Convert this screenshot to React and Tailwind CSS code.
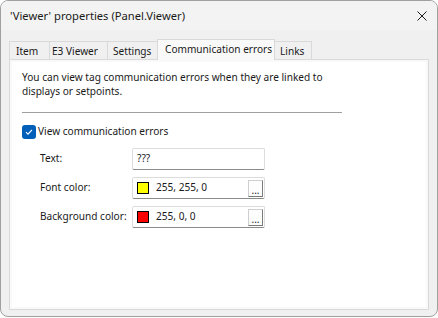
import React from "react";

const font = { fontFamily: '"Noto Sans", "Liberation Sans", sans-serif' };

const tabs = [
  { label: "Item", w: "w-[41px]", pl: "pl-[6px]" },
  { label: "E3 Viewer", w: "w-[59px]", pl: "pl-[2px]" },
  { label: "Settings", w: "w-[51px]", pl: "pl-[5px]" },
  { label: "Communication errors", w: "w-[118px]", pl: "pl-[7px]", active: true },
  { label: "Links", w: "w-[38px]", pl: "pl-[5px]" },
];

const ColorField = ({ color, value }) => (
  <div className="flex items-center w-[133px] h-[22px] bg-white border border-[#dcdcdc] border-b-[#8a8a8a] rounded-[2px] pl-[4px] pr-[1px]">
    <span className={`w-[12px] h-[12px] border border-black ${color}`}></span>
    <span className="ml-[7px] flex-1 whitespace-nowrap">{value}</span>
    <span className="w-[15px] h-[17px] flex items-end justify-center bg-[#fdfdfd] border border-[#cfcfcf] border-b-[#7a7a7a] border-r-[#7a7a7a] text-[10px] leading-[12px]">
      ...
    </span>
  </div>
);

export default function App() {
  return (
    <div className="w-[438px] h-[318px] bg-white text-[10.1px] text-[#1a1a1a]" style={font}>
      <div className="w-[438px] h-[317px] flex flex-col rounded-[8px] border border-[#a0a0a0] bg-[#f0f0f0] overflow-hidden">
        {/* title bar */}
        <div className="h-[29px] flex items-center justify-between bg-[#f3f3f3] pl-[9px] pr-[10px]">
          <span className="whitespace-nowrap pt-[1px] text-[11.2px]">'Viewer' properties (Panel.Viewer)</span>
          <svg width="10" height="10" viewBox="0 0 10 10" className="mt-[1px]">
            <path d="M0.5 0.5 L9.5 9.5 M9.5 0.5 L0.5 9.5" stroke="#1a1a1a" strokeWidth="1" fill="none" />
          </svg>
        </div>

        {/* tabs */}
        <div className="flex items-end pl-[8px] mt-[8px] h-[21px]">
          {tabs.map((t) =>
            t.active ? (
              <div
                key={t.label}
                className={`${t.w} ${t.pl} h-[21px] -mb-[1px] -ml-px z-10 bg-[#f9f9f9] border border-[#d9d9d9] border-b-0 leading-[17px] pt-[1px] whitespace-nowrap`}
              >
                {t.label}
              </div>
            ) : (
              <div
                key={t.label}
                className={`${t.w} ${t.pl} h-[18px] bg-[#f0f0f0] border border-[#d9d9d9] border-b-0 -ml-px first:ml-0 leading-[19px] whitespace-nowrap`}
              >
                {t.label}
              </div>
            )
          )}
        </div>

        {/* panel */}
        <div className="ml-[8px] w-[420px] h-[251px] border border-[#d9d9d9] bg-[#f9f9f9] p-[2px]">
          <div className="w-full h-full bg-white pl-[10px] pt-[8px]">
            <p className="leading-[14px] whitespace-nowrap">
              You can view tag communication errors when they are linked to
              <br />
              displays or setpoints.
            </p>
            <div className="w-[320px] h-px bg-[#a0a0a0] mt-[14px]"></div>

            <div className="flex items-center mt-[12px] h-[14px]">
              <span className="w-[14px] h-[14px] rounded-[3px] bg-[#005fb8] flex items-center justify-center">
                <svg width="10" height="10" viewBox="0 0 10 10">
                  <path d="M2 5.2 L4 7.2 L8 2.8" stroke="white" strokeWidth="1.1" fill="none" />
                </svg>
              </span>
              <span className="ml-[2px]">View communication errors</span>
            </div>

            <div className="flex flex-col gap-[7px] mt-[9px] pl-[18px]">
              <div className="flex items-center">
                <span className="w-[92px] whitespace-nowrap">Text:</span>
                <div className="w-[133px] h-[22px] bg-white border border-[#dcdcdc] border-b-[#8a8a8a] rounded-[2px] pl-[4px] flex items-center">
                  ???
                </div>
              </div>
              <div className="flex items-center">
                <span className="w-[92px] whitespace-nowrap">Font color:</span>
                <ColorField color="bg-[#ffff00]" value="255, 255, 0" />
              </div>
              <div className="flex items-center">
                <span className="w-[92px] whitespace-nowrap">Background color:</span>
                <ColorField color="bg-[#ff0000]" value="255, 0, 0" />
              </div>
            </div>
          </div>
        </div>
      </div>
    </div>
  );
}
